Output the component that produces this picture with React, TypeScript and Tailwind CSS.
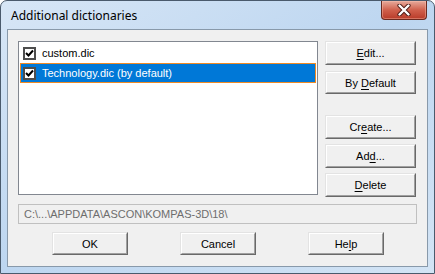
import React from "react";

const font = { fontFamily: '"Liberation Sans", Arial, sans-serif' };

function Mnemonic({ text, at }: { text: string; at: number }) {
  return (
    <span className="whitespace-pre">
      {text.slice(0, at)}
      <span className="underline underline-offset-[2px]">{text[at]}</span>
      {text.slice(at + 1)}
    </span>
  );
}

function Button({ children, className = "" }: { children: React.ReactNode; className?: string }) {
  return (
    <div
      className={
        "flex items-center justify-center bg-[#f0f0f0] border border-t-[#e3e3e3] border-l-[#e3e3e3] border-r-[#696969] border-b-[#696969] text-[11px] text-black " +
        className
      }
    >
      <div className="flex flex-1 self-stretch items-center justify-center border border-t-white border-l-white border-r-[#a0a0a0] border-b-[#a0a0a0] pt-[1px]">
        {children}
      </div>
    </div>
  );
}

function Check() {
  return (
    <div className="w-[13px] h-[13px] border-2 border-[#4d4d4d] bg-white flex items-center justify-center shrink-0">
      <svg width="9" height="9" viewBox="0 0 9 9">
        <path d="M1 4 L3.5 6.5 L8 1.5" stroke="#000" strokeWidth="2" fill="none" />
      </svg>
    </div>
  );
}

function CloseButton() {
  return (
    <div className="w-[46px] h-[19px] mr-[7px] rounded-b-[4px] border border-t-0 border-[#6a2a20] bg-gradient-to-b from-[#e6aa9c] via-[#d0604c] to-[#b83a28] flex items-center justify-center shadow-[inset_0_0_0_1px_rgba(255,200,180,0.4)]">
      <svg width="16" height="12" viewBox="0 0 16 12">
        <path d="M3.5 1.5 L12.5 10.5 M12.5 1.5 L3.5 10.5" stroke="#4a1a14" strokeWidth="4.2" strokeLinecap="round" />
        <path d="M3.5 1.5 L12.5 10.5 M12.5 1.5 L3.5 10.5" stroke="#fff" strokeWidth="2.4" strokeLinecap="round" />
      </svg>
    </div>
  );
}

export default function App() {
  return (
    <div className="w-[435px] h-[274px] overflow-hidden bg-white" style={font}>
      <div className="w-full h-full flex flex-col rounded-t-[7px] border border-[#4a5a6c] bg-gradient-to-br from-[#d7e6f6] via-[#bdd6f0] to-[#d3e4f5]">
        {/* title bar */}
        <div className="h-[28px] flex items-start shrink-0">
          <div className="flex-1 pl-[10px] pt-[6px] text-[12px] text-black" style={{ fontFamily: '"Noto Sans", "Liberation Sans", sans-serif' }}>
            Additional dictionaries
          </div>
          <CloseButton />
        </div>

        {/* client area */}
        <div className="ml-[6px] mr-[6px] h-[238px] border border-[#8899aa] bg-[#f0f0f0] flex flex-col pt-[11px] pl-[10px] text-[11px]">
          <div className="flex">
            <div className="w-[300px] h-[154px] border border-[#828790] bg-white p-[1px] flex flex-col">
              <div className="h-[20px] flex items-center pl-[2px] gap-[6px] border border-transparent text-black">
                <Check />
                <span>custom.dic</span>
              </div>
              <div className="h-[20px] flex items-center pl-[2px] gap-[6px] border border-[#f08a24] bg-[#0078d7] text-white">
                <Check />
                <span>Technology.dic (by default)</span>
              </div>
            </div>
            <div className="ml-[7px] flex flex-col w-[91px]">
              <Button className="h-[24px]"><Mnemonic text="Edit..." at={0} /></Button>
              <Button className="h-[23px] mt-[6px]"><Mnemonic text="By Default" at={3} /></Button>
              <Button className="h-[24px] mt-[21px]"><Mnemonic text="Create..." at={2} /></Button>
              <Button className="h-[24px] mt-[5px]"><Mnemonic text="Add..." at={2} /></Button>
              <Button className="h-[24px] mt-[5px]"><Mnemonic text="Delete" at={0} /></Button>
            </div>
          </div>

          <div className="mt-[7px] w-[399px] h-[20px] border border-[#c0c0c0] bg-[#f0f0f0] text-[#6d6d6d] flex items-center pl-[5px]">
            C:\...\APPDATA\ASCON\KOMPAS-3D\18\
          </div>

          <div className="mt-[8px] flex pl-[34px] gap-[52px]">
            <Button className="w-[76px] h-[23px]">OK</Button>
            <Button className="w-[76px] h-[23px]">Cancel</Button>
            <Button className="w-[76px] h-[23px]"><Mnemonic text="Help" at={2} /></Button>
          </div>
        </div>
      </div>
    </div>
  );
}
